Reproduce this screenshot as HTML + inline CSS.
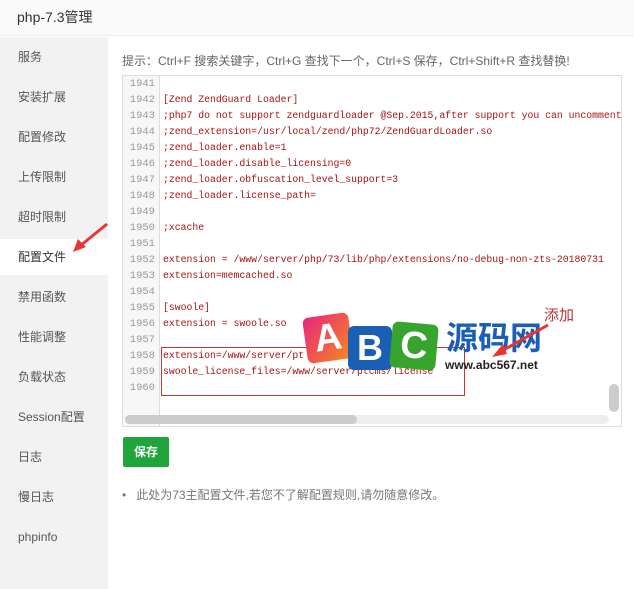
<!DOCTYPE html><html><head><meta charset="utf-8"><style>
body{margin:0;width:634px;height:589px;background:#fff;font-family:"Liberation Sans","Noto Sans CJK SC",sans-serif;overflow:hidden;position:relative}
.hd{position:absolute;left:0;top:0;width:634px;height:36px;background:#fafafa;border-bottom:1px solid #eee;font-size:14px;color:#333;line-height:34px;padding-left:17px;box-sizing:border-box}
.sb{position:absolute;left:0;top:37px;width:108px;height:552px;background:#f2f2f2}
.sb div{position:absolute;left:0;width:108px;height:36px;line-height:36px;padding-left:18px;font-size:12px;color:#555;box-sizing:border-box}
.sb .on{background:#fff;color:#333}
.tip{position:absolute;left:122px;top:52px;font-size:12px;color:#666}
.ed{position:absolute;left:122px;top:75px;width:500px;height:352px;border:1px solid #ddd;box-sizing:border-box;background:#fff;overflow:hidden}
.gut{position:absolute;left:0;top:0;width:36px;height:100%;background:#f7f7f7;border-right:1px solid #ddd}
.ln{position:absolute;left:0;font-family:"Liberation Mono",monospace;font-size:10.5px;color:#999;width:32px;text-align:right}
.cd{position:absolute;left:40px;font-family:"Liberation Mono",monospace;font-size:9.8px;color:#a11;white-space:nowrap}
.hs{position:absolute;left:2px;bottom:2px;width:484px;height:9px;background:#eee;border-radius:5px}
.hs i{position:absolute;left:0;top:0;width:232px;height:9px;background:#ccc;border-radius:5px}
.vs{position:absolute;right:2px;top:308px;width:10px;height:28px;background:#ccc;border-radius:5px}
.btn{position:absolute;left:123px;top:437px;width:46px;height:30px;background:#20a53a;border-radius:2px;color:#fff;font-size:12px;font-weight:bold;text-align:center;line-height:30px}
.note{position:absolute;left:122px;top:486px;font-size:12px;color:#777}
</style></head><body>
<div class="hd">php-7.3管理</div>
<div class="sb">
<div style="top:2px">服务</div><div style="top:42px">安装扩展</div><div style="top:82px">配置修改</div><div style="top:122px">上传限制</div><div style="top:162px">超时限制</div><div class="on" style="top:202px">配置文件</div><div style="top:242px">禁用函数</div><div style="top:282px">性能调整</div><div style="top:322px">负载状态</div><div style="top:362px">Session配置</div><div style="top:402px">日志</div><div style="top:442px">慢日志</div><div style="top:482px">phpinfo</div>
</div>
<div class="tip">提示：Ctrl+F 搜索关键字，Ctrl+G 查找下一个，Ctrl+S 保存，Ctrl+Shift+R 查找替换!</div>
<div class="ed"><div class="gut"></div>
<div class="ln" style="top:2px">1941</div><div class="ln" style="top:18px">1942</div><div class="ln" style="top:34px">1943</div><div class="ln" style="top:50px">1944</div><div class="ln" style="top:66px">1945</div><div class="ln" style="top:82px">1946</div><div class="ln" style="top:98px">1947</div><div class="ln" style="top:114px">1948</div><div class="ln" style="top:130px">1949</div><div class="ln" style="top:146px">1950</div><div class="ln" style="top:162px">1951</div><div class="ln" style="top:178px">1952</div><div class="ln" style="top:194px">1953</div><div class="ln" style="top:210px">1954</div><div class="ln" style="top:226px">1955</div><div class="ln" style="top:242px">1956</div><div class="ln" style="top:258px">1957</div><div class="ln" style="top:274px">1958</div><div class="ln" style="top:290px">1959</div><div class="ln" style="top:306px">1960</div>
<div class="cd" style="top:18px">[Zend ZendGuard Loader]</div>
<div class="cd" style="top:34px">;php7 do not support zendguardloader @Sep.2015,after support you can uncomment</div>
<div class="cd" style="top:50px">;zend_extension=/usr/local/zend/php72/ZendGuardLoader.so</div>
<div class="cd" style="top:66px">;zend_loader.enable=1</div>
<div class="cd" style="top:82px">;zend_loader.disable_licensing=0</div>
<div class="cd" style="top:98px">;zend_loader.obfuscation_level_support=3</div>
<div class="cd" style="top:114px">;zend_loader.license_path=</div>
<div class="cd" style="top:146px">;xcache</div>
<div class="cd" style="top:178px">extension = /www/server/php/73/lib/php/extensions/no-debug-non-zts-20180731</div>
<div class="cd" style="top:194px">extension=memcached.so</div>
<div class="cd" style="top:226px">[swoole]</div>
<div class="cd" style="top:242px">extension = swoole.so</div>
<div class="cd" style="top:274px">extension=/www/server/pt</div>
<div class="cd" style="top:290px">swoole_license_files=/www/server/ptcms/license</div>
<div style="position:absolute;left:38px;top:271px;width:302px;height:47px;border:1px solid #c33"></div>
<div class="hs"><i></i></div><div class="vs"></div>
</div>
<div style="position:absolute;left:305px;top:315px;width:46px;height:46px;background:linear-gradient(135deg,#e8257a,#f78a1e);border-radius:6px;transform:rotate(-8deg);color:#fff;font:bold 38px 'Liberation Sans';text-align:center;line-height:46px">A</div>
<div style="position:absolute;left:348px;top:326px;width:44px;height:44px;background:#1a5fb4;border-radius:6px;color:#fff;font:bold 36px 'Liberation Sans';text-align:center;line-height:44px">B</div>
<div style="position:absolute;left:391px;top:323px;width:46px;height:46px;background:#37a52d;border-radius:6px;transform:rotate(5deg);color:#fff;font:bold 38px 'Liberation Sans';text-align:center;line-height:46px">C</div>
<div style="position:absolute;left:446px;top:318px;font:bold 32px 'Noto Sans CJK SC',sans-serif;color:#1a5fb4;line-height:36px">源码网</div>
<div style="position:absolute;left:445px;top:358px;font:bold 12px 'Liberation Sans';color:#222">www.abc567.net</div>
<div style="position:absolute;left:544px;top:304px;font-size:15px;color:#b33">添加</div>
<svg style="position:absolute;left:0;top:0" width="634" height="589"><path d="M548 325 L500 352" stroke="#e33" stroke-width="3"/><path d="M492 357 L503 344 L507 354Z" fill="#e33"/><path d="M107 224 L80 246" stroke="#e33" stroke-width="3"/><path d="M73 252 L78 239 L86 247Z" fill="#e33"/></svg>
<div class="btn">保存</div>
<div class="note">•&nbsp;&nbsp;&nbsp;此处为73主配置文件,若您不了解配置规则,请勿随意修改。</div>
</body></html>
